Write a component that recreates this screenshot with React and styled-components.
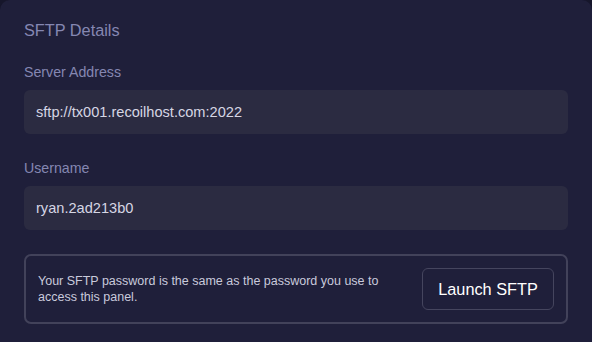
import styled, { createGlobalStyle } from 'styled-components'

const Global = createGlobalStyle`
  html, body {
    margin: 0;
    padding: 0;
    background: #16162b;
  }
  body {
    font-family: "Liberation Sans", Arial, sans-serif;
  }
`

const Panel = styled.section`
  box-sizing: border-box;
  height: 342px;
  background: #1f1f3a;
  border-radius: 10px 10px 0 0;
  padding: 21px 24px 0;
`

const Title = styled.h2`
  margin: 0 0 24px;
  font-size: 16.3px;
  font-weight: 400;
  color: #8587b2;
`

const Field = styled.div`
  margin-bottom: ${p => p.$gap || 26}px;
`

const Label = styled.div`
  font-size: 14.2px;
  color: #8587b2;
  margin-bottom: 10px;
`

const Value = styled.div`
  box-sizing: border-box;
  height: 44px;
  display: flex;
  align-items: center;
  padding: 0 12px;
  background: #2b2b41;
  border-radius: 6px;
  font-size: 14.6px;
  color: #d6d6e4;
`

const Notice = styled.div`
  box-sizing: border-box;
  display: flex;
  align-items: center;
  justify-content: space-between;
  gap: 24px;
  padding: 12px;
  border: 2px solid #42425a;
  border-radius: 7px;
`

const NoticeText = styled.p`
  margin: 0;
  max-width: 360px;
  font-size: 12.5px;
  line-height: 16px;
  color: #c9cadc;
`

const Button = styled.button`
  box-sizing: border-box;
  height: 42px;
  width: 135px;
  padding: 0;
  background: transparent;
  border: 1px solid #45455e;
  border-radius: 6px;
  font-family: inherit;
  font-size: 16.3px;
  color: #ffffff;
  cursor: pointer;
`

export default function App() {
  return (
    <>
      <Global />
      <Panel>
        <Title>SFTP Details</Title>
        <Field>
          <Label>Server Address</Label>
          <Value>sftp://tx001.recoilhost.com:2022</Value>
        </Field>
        <Field $gap={24}>
          <Label>Username</Label>
          <Value>ryan.2ad213b0</Value>
        </Field>
        <Notice>
          <NoticeText>
            Your SFTP password is the same as the password you use to access this panel.
          </NoticeText>
          <Button>Launch SFTP</Button>
        </Notice>
      </Panel>
    </>
  )
}
